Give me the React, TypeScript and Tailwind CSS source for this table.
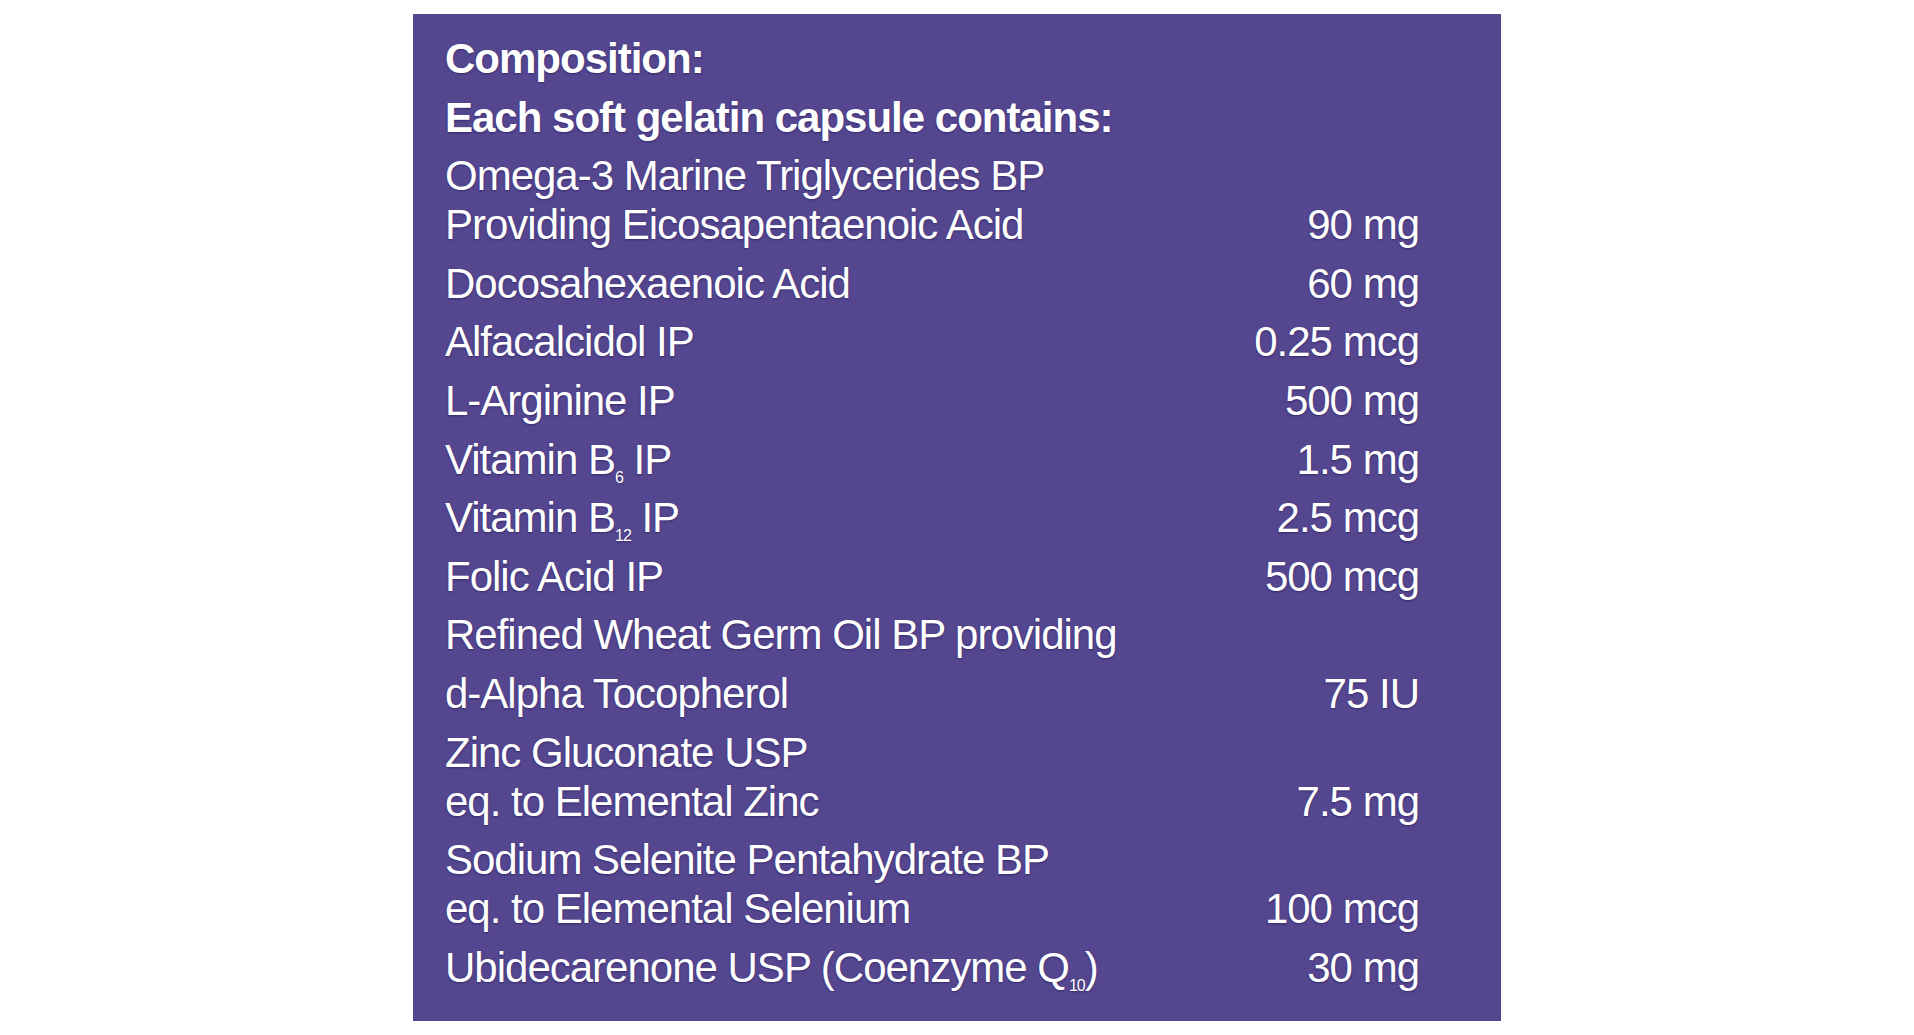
import React from "react";

type Row = { lines: React.ReactNode[]; value?: string; bold?: boolean };

const Sub = ({ children }: { children: React.ReactNode }) => (
  <span className="relative top-[9px] text-[16px] tracking-[-1px] leading-none align-baseline">{children}</span>
);

const rows: Row[] = [
  { lines: ["Composition:"], bold: true },
  { lines: ["Each soft gelatin capsule contains:"], bold: true },
  { lines: ["Omega-3 Marine Triglycerides BP", "Providing Eicosapentaenoic Acid"], value: "90 mg" },
  { lines: ["Docosahexaenoic Acid"], value: "60 mg" },
  { lines: ["Alfacalcidol IP"], value: "0.25 mcg" },
  { lines: ["L-Arginine IP"], value: "500 mg" },
  {
    lines: [
      <>
        Vitamin B<Sub>6</Sub> IP
      </>,
    ],
    value: "1.5 mg",
  },
  {
    lines: [
      <>
        Vitamin B<Sub>12</Sub> IP
      </>,
    ],
    value: "2.5 mcg",
  },
  { lines: ["Folic Acid IP"], value: "500 mcg" },
  { lines: ["Refined Wheat Germ Oil BP providing"] },
  { lines: ["d-Alpha Tocopherol"], value: "75 IU" },
  { lines: ["Zinc Gluconate USP", "eq. to Elemental Zinc"], value: "7.5 mg" },
  { lines: ["Sodium Selenite Pentahydrate BP", "eq. to Elemental Selenium"], value: "100 mcg" },
  {
    lines: [
      <>
        Ubidecarenone USP (Coenzyme Q<Sub>10</Sub>)
      </>,
    ],
    value: "30 mg",
  },
];

export default function App() {
  return (
    <div className="min-h-[1035px] bg-white flex justify-center pt-[14px]">
      <div
        className="w-[1088px] h-[1007px] bg-[#54468f] pl-[32px] pr-[82px] pt-[20px] flex flex-col gap-[9.6px] text-white text-[42px] leading-[49px] tracking-[-1px] [text-shadow:0_1px_2px_rgba(30,20,80,0.55)]"
        style={{ fontFamily: '"Liberation Sans", Arial, sans-serif' }}
      >
        {rows.map((r, i) => (
          <div key={i} className="flex items-end justify-between">
            <div className={r.bold ? "font-bold" : ""}>
              {r.lines.map((l, j) => (
                <div key={j} className="whitespace-nowrap">
                  {l}
                </div>
              ))}
            </div>
            {r.value && <div className="whitespace-nowrap text-right">{r.value}</div>}
          </div>
        ))}
      </div>
    </div>
  );
}
